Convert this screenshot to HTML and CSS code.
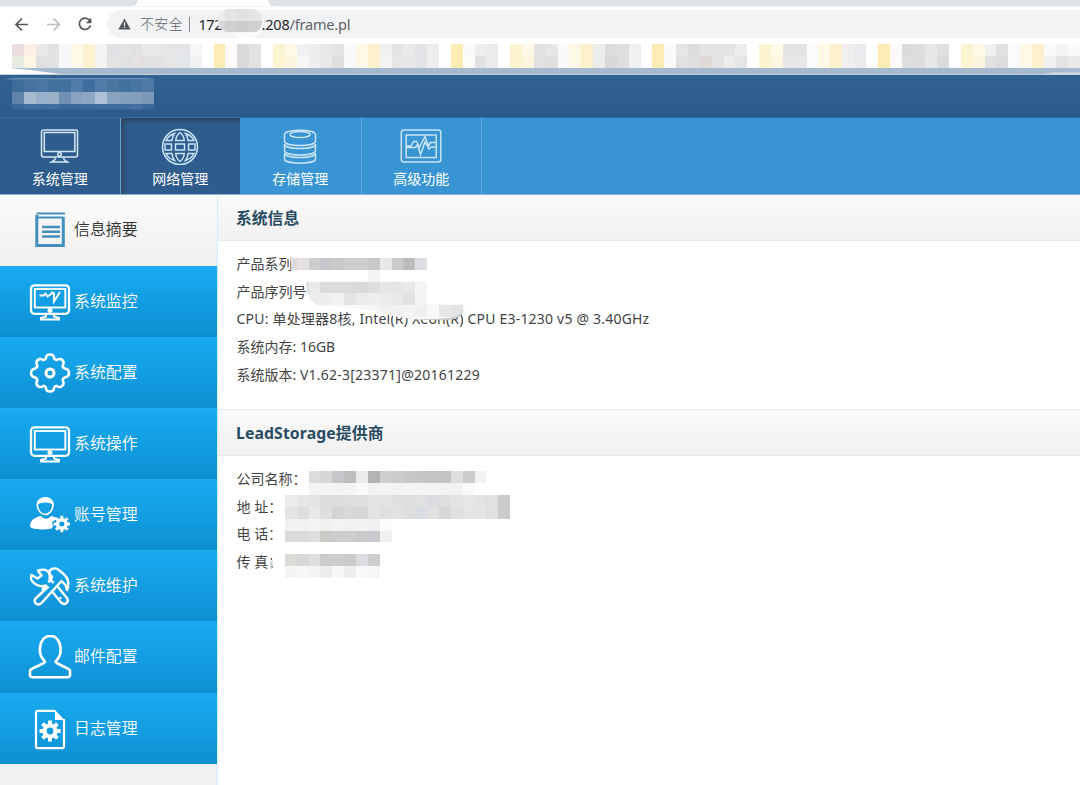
FILE: index.html
```
<!DOCTYPE html>
<html lang="zh-CN">
<head>
<meta charset="utf-8">
<title>系统管理</title>
<link rel="stylesheet" href="styles.css">
</head>
<body>
<div class="window">
  <div class="tabstrip"><i class="tab-left"></i><i class="tab-right"></i></div>
  <div class="toolbar">
    <svg class="nav-buttons" width="77" height="32" viewBox="0 8 77 32" fill="none" stroke-width="1.7">
      <path stroke="#54575c" d="M28 24.500H16.500M22 18.500l-6 6 6 6"/>
      <path stroke="#bcbec1" d="M47 24.500h12M53.500 18.500l6 6-6 6"/>
    </svg>
    <svg class="reload" width="16" height="16" viewBox="0 0 16 16" fill="none" stroke="#54575c" stroke-width="1.7"><path d="M12.600 4.300A5.700 5.700 0 1 0 13.500 9.500"/><path d="M14.300 1.800v5.400H8.900z" fill="#54575c" stroke="none"/></svg>
    <div class="address">
      <svg width="13" height="12" viewBox="0 0 13 12"><path d="M6.500 .5 12.700 11.500H.3z" fill="#54575c"/><path d="M6.500 4.300v3.500M6.500 8.700v1.300" stroke="#fff" stroke-width="1.200"/></svg>
      <span class="unsafe">不安全</span><i class="bar"></i><span class="ip">172</span><span class="host">.208</span><span class="path">/frame.pl</span>
    </div>
  </div>
  <div class="bookmarks"></div>
  <div class="band"></div>
  <header class="brand"></header>
  <nav class="topnav">
    <a class="top dark">
      <svg width="40" height="38" viewBox="0 0 40 38" fill="none" stroke="#d5e8f6" stroke-width="1.500"><rect x="1.500" y="3" width="36" height="27" rx="2"/><rect x="4.300" y="5.500" width="30.500" height="19"/><circle cx="19.500" cy="27.300" r="1.800"/><path d="M15.500 30.500c0 3-1.500 3-4 4.500h16c-2.500-1.500-4-1.500-4-4.500"/></svg>
      <span>系统管理</span></a>
    <a class="top dark pressed">
      <svg width="40" height="38" viewBox="0 0 40 38" fill="none" stroke="#c7e4f8" stroke-width="1.500"><circle cx="20" cy="20" r="17.500"/><path d="M5 17h6.500v6H5zM15.500 17h9v6h-9zM28.500 17H35v6h-6.500zM20 5.500c-2.500 2-4 4.500-4.300 8h8.600c-.3-3.500-1.800-6-4.300-8zM20 34.500c-2.500-2-4-4.500-4.300-8h8.600c-.3 3.500-1.800 6-4.300 8zM14.500 6.500C10 8 7.300 10.500 6 13.500h6c.2-2.500 1-5 2.500-7zM25.500 6.500c4.500 1.500 7.200 4 8.500 7h-6c-.2-2.500-1-5-2.500-7zM14.500 33.500c-4.500-1.500-7.200-4-8.500-7h6c.2 2.500 1 5 2.500 7zM25.500 33.500c4.500-1.500 7.200-4 8.500-7h-6c-.2 2.500-1 5-2.500 7z"/></svg>
      <span>网络管理</span></a>
    <a class="top">
      <svg width="40" height="38" viewBox="0 0 40 38" fill="none" stroke="#c9e4f6" stroke-width="1.500"><ellipse cx="20" cy="7.500" rx="10" ry="3"/><path d="M4.500 8c0-6.500 31-6.500 31 0v6c0 6-31 6-31 0zM4.500 17c0 6 31 6 31 0v6.500c0 6-31 6-31 0zM4.500 26c0 6 31 6 31 0v6c0 5.500-31 5.500-31 0z"/></svg>
      <span>存储管理</span></a>
    <a class="top">
      <svg width="44" height="38" viewBox="0 0 44 38" fill="none" stroke="#c9e4f6" stroke-width="1.500"><rect x="2.300" y="3" width="39.500" height="32" rx="2.500"/><rect x="7.200" y="8" width="30" height="22.500"/><path d="M8 19h4l2.500-4.500h3l3 5.500L26 9.500 29.500 19l2-3.500h5M8 20.500h8.500l2-3 3 10L26 15l4 7 2-2h5"/></svg>
      <span>高级功能</span></a>
  </nav>
  <div class="main">
    <aside class="side">
      <a class="item current"><svg class="ico" viewBox="0 0 44 44" fill="none" stroke="#438fbd"><path d="M8.800 7v30.500h26.500V9" stroke-width="3"/><path d="M8.500 5.500h28.500M9 9.500h26.500" stroke-width="2"/><path d="M14 19h18M14 23.700h18M14 28.400h18" stroke-width="2.500"/></svg><span>信息摘要</span></a>
      <a class="item"><svg class="ico" viewBox="0 0 44 44"><use href="#monitor"/><path d="M11.500 15.500h4l2-2 2 3 3-2 2-2 1.500 1v8l6-9.500" stroke="#fff" stroke-width="1.900" fill="none"/></svg><span>系统监控</span></a>
      <a class="item"><svg class="ico" viewBox="0 0 44 44" fill="none" stroke="#fff" stroke-width="2.600"><circle cx="22" cy="22" r="4" stroke-width="3"/><path stroke-linejoin="round" d="M18 7q0-3.500 4-3.500T26 7q.5 2 2.500 2.200 1.500-1.500 4-1.200 3.500 1.500 3 4.500-1.500 3 0 4.200Q37.500 18 39 18.200q2 1.300 2 3.800t-2 3.800q-1.500.2-3.500 1.500-1.500 1.200 0 4.200.5 3-3 4.500-2.500.3-4-1.200Q26.500 35 26 37q0 3.500-4 3.500T18 37q-.5-2-2.500-2.200-1.500 1.500-4 1.200-3.500-1.500-3-4.500 1.500-3 0-4.200Q6.500 26 5 25.800q-2-1.300-2-3.800t2-3.800Q6.500 18 8.500 16.700q1.500-1.200 0-4.200-.5-3 3-4.500 2.500-.3 4 1.200Q17.500 9 18 7z"/></svg><span>系统配置</span></a>
      <a class="item"><svg class="ico" viewBox="0 0 44 44"><g id="monitor" fill="none" stroke="#fff"><rect x="3" y="5.300" width="38" height="28.500" rx="3.500" stroke-width="2.300"/><rect x="6.800" y="9" width="30.500" height="18.500" stroke-width="1.900"/><circle cx="22" cy="30.500" r="2.500" fill="#fff" stroke="none"/><path d="M18 34v2.500l-5 1.500v1.500h18V38l-5-1.500V34" stroke-width="2"/></g></svg><span>系统操作</span></a>
      <a class="item"><svg class="ico" viewBox="0 0 44 44"><path fill="#fff" d="M2 33.500c0-7 5-9 11-10.500 3 3.500 7 3.500 10 0 2 1 5 1 6.500 2.500L24 29l1 4.500-1.500 2C13 37.500 3 36 2 33.500z"/><path d="M9.300 12c-.7-8 16.500-9 15.700 0-.5 5.500-3.500 9.500-7.700 9.500S10 17.500 9.300 12z" fill="none" stroke="#fff" stroke-width="1.700"/><path d="M9 12C8 1.500 26.500 1 25.200 12c-2.500-3.500-13-3.500-16.200 0z" fill="#fff"/><g transform="translate(33.800 31)"><circle r="4.300" fill="none" stroke="#fff" stroke-width="3.400"/><g stroke="#fff" stroke-width="3"><path d="M0-8.200V-5M0 5v3.200M-8.200 0H-5M5 0h3.200M-5.800-5.800l2.300 2.300M3.500 3.500l2.300 2.300M5.800-5.800 3.500-3.500M-3.500 3.500l-2.300 2.300"/></g></g></svg><span>账号管理</span></a>
      <a class="item"><svg class="ico" viewBox="0 0 44 44" fill="none" stroke="#fff" stroke-width="2.400" stroke-linejoin="round"><path d="M20.500 22.500 7.500 34.500c-3 4 2.500 8 6 4.500L33.500 17l4 4 1.500 5c3.500-8.500-.5-14.500-6.500-18.500-5-6-11-2-11.500 1.500l3 4-3.500 5.500"/><path d="m24.500 28 8.500 10.500c4 3.500 8.500-.5 6-4.500L29.500 22.500M14 26l4-4.500c-3 1-6 1-9-.5-5-2.500-7-6.500-5.500-10l6 3.500 4-3-3.500-5c8-2.500 13 1 11.500 8l4 4.500"/><circle cx="32.500" cy="34" r="1" fill="#fff" stroke-width=".5"/></svg><span>系统维护</span></a>
      <a class="item"><svg class="ico" viewBox="0 0 44 44" fill="none" stroke="#fff" stroke-width="2.600" stroke-linejoin="round"><path d="M17 27.500c-3-3.500-5.500-6.500-5-10.500C10.500-3.500 34-3.500 32.500 17c.5 4-2 7-5 10.500 1.500 3 10 4.500 14.500 8.500v5.500q-.5 1.500-2 1.500H4q-1.500 0-2-1.500V36c4.500-4 13.500-5.500 15-8.500z" transform="translate(0 -.8)"/></svg><span>邮件配置</span></a>
      <a class="item"><svg class="ico" viewBox="0 0 44 44"><path d="M27 3.800H10q-2 0-2 2v33.400q0 2 2 2h24q2 0 2-2V12" fill="none" stroke="#fff" stroke-width="2.200"/><path d="M27 3l9.500 10H27z" fill="#fff"/><g transform="translate(22 24)"><circle r="5.500" fill="none" stroke="#fff" stroke-width="4.200"/><g stroke="#fff" stroke-width="4"><path d="M0-10.500V-6M0 6v4.500M-10.500 0H-6M6 0h4.500M-7.400-7.400l3 3M4.400 4.400l3 3M7.400-7.400l-3 3M-4.400 4.400l-3 3"/></g></g></svg><span>日志管理</span></a>
    </aside>
    <section class="content">
      <h2>系统信息</h2>
      <div class="lines first">
        <p>产品系列</p>
        <p>产品序列号</p>
        <p><span class="cpu">CPU: 单处理器8核, Intel(R) Xeon(R) CPU E3-1230 v5 @ 3.40GHz</span></p>
        <p>系统内存: 16GB</p>
        <p>系统版本: <span class="ver">V1.62-3[23371]@20161229</span></p>
      </div>
      <h2 class="second">LeadStorage提供商</h2>
      <div class="lines">
        <p>公司名称：</p>
        <p>地 址：</p>
        <p>电 话：</p>
        <p>传 真：</p>
      </div>
    </section>
  </div>
  <svg class="mosaic" width="1080" height="785" viewBox="0 0 1080 785">
    <defs>
      <clipPath id="ipClip"><path d="M229 8.500h24q9 3 9 12T256 32h-29q-8-2-9-11t11-12.500z"/></clipPath>
      <clipPath id="brandClip"><rect x="12" y="79" width="142.300" height="30.500" rx="3"/></clipPath>
      <clipPath id="serialClip"><path d="M306 281h121v23h38q-2 15-17 16h-23q-30-2-50-9-20-5-55-4-14-6-14-26z"/></clipPath>
    </defs>
    <path fill="#fff" d="M0 68h10l20 2 30 4H0z"/>
    <path fill="#d8dce2" d="M1080 72.500h-28l-8 1.800h36z"/>
    <path fill="#fff" d="M291.500 255H430v16H291.500zM275.500 496h13v22h-13zM272.500 520h16v27h-16zM270 550h16v26h-10z"/>
    <path fill="#dcdce0" d="M290 258h7v12h-5z"/>
    <path fill="#c9c9c8" d="M270 569q0-8 2.500-9v8z"/>
    <path fill="#f9f9f9" d="M306 281h121v23h38q-2 15-17 16h-23q-30-2-50-9-20-5-55-4-14-6-14-26z"/>
    <path fill="#fafafa" d="M229 8.500h24q13 6 9 22-5 8-17 8-10 0-15-6-14-3-12-12 2-10 11-12z"/>
    <path d="M6 79.500q4-1.500 12-1.500h128q6 0 8 1.500z" fill="#6b91b5"/>
  </svg>
</div>
<script src="mosaic.js"></script>
</body>
</html>
```
FILE: styles.css
```
* { box-sizing: border-box; }
body { margin: 0; background: #fff; font-family: "Noto Sans", "Noto Sans CJK SC", sans-serif; color: #444; }
.window { position: relative; width: 1080px; height: 785px; overflow: hidden; display: flex; flex-direction: column; }
.tabstrip { height: 6px; flex: none; display: flex; justify-content: space-between; background: #fff; }
.tab-left { width: 138px; background: #dee1e6; border-radius: 0 0 6px 0; }
.tab-right { width: 812px; background: #dee1e6; border-radius: 0 0 0 6px; }
.toolbar { height: 38px; flex: none; display: flex; align-items: flex-start; padding-top: 4px; border-top: 1px solid #f3f4f5; }
.nav-buttons { flex: none; margin-top: -3px; }
.reload { margin-top: 5px; flex: none; }
.address { flex: 1; height: 28px; margin-left: 14px; margin-top: -1px; border-radius: 14px 0 0 14px; background: #f1f3f4; display: flex; align-items: center; padding-left: 11px; font-size: 14.500px; line-height: 28px; color: #5f6368; }
.unsafe { font-family: "Noto Sans CJK SC", sans-serif; font-weight: 300; font-size: 14.200px; margin-left: 9px; margin-top: -2px; }
.bar { width: 1px; height: 15px; background: #85888c; margin: 0 9px 0 6px; }
.ip, .host, .path { margin-top: -1px; }
.ip, .host { color: #26282b; }
.ip { width: 63px; letter-spacing: -.5px; }
.host, .path { letter-spacing: -.2px; }
.bookmarks { height: 24px; flex: none; }
.band { height: 7px; flex: none; background: #a6bacf; border-bottom: 1px solid #c9cdd0; }
.brand { height: 43px; flex: none; background: linear-gradient(#306292, #2c5a8b); border-bottom: 1px solid #2f6ea6; }
.topnav { height: 77px; flex: none; display: flex; background: #3894d3; border-bottom: 1px solid #84b4da; }
.top { width: 120.500px; display: flex; flex-direction: column; align-items: center; padding-top: 9px; border-right: 1px solid #5eaade; color: #fff; font: 14px/22px "Noto Sans CJK SC", sans-serif; }
.top svg { height: 38px; flex: none; }
.top span { margin-top: 2px; }
.dark { background: #2d5c8d; }
.top.pressed { width: 119.500px; border-right: 0; box-shadow: inset 4px 4px 4px -1px #34465c; }
.pressed + .top { width: 121.500px; }
.main { flex: 1; display: flex; min-height: 0; }
.side { width: 217.500px; flex: none; background: #f1f1f1; border-right: 1px solid #d3ecfa; }
.item { height: 71.150px; display: flex; align-items: center; padding-left: 28px; background: linear-gradient(#19aaf1, #0d90d2); border-top: 1px solid #21a9ee; color: #fff; font: 350 15.900px/24px "Noto Sans CJK SC", sans-serif; }
.item.current { height: 70.700px; background: linear-gradient(#fbfbfb, #f0f0f0); border-top: 0; color: #333; }
.item span { margin-top: -2px; margin-left: 2px; }
.ico { width: 44px; height: 44px; flex: none; margin-top: 0; }
.content { flex: 1; }
h2 { margin: 0; height: 46px; padding-left: 18.500px; background: linear-gradient(#fafafa, #f1f1f1); border: 1px solid #e7e7e7; border-width: 0 0 1px; font: 700 15.800px/46px "Noto Sans", "Noto Sans CJK SC", sans-serif; color: #284a62; }
.second { height: 47px; border-top-width: 1px; line-height: 47px; letter-spacing: .1px; }
.lines { padding: 9px 0 0 19px; }
.first { height: 168px; }
.lines p { margin: 0; height: 27.700px; font: 14px/27.700px "Noto Sans", "Noto Sans CJK SC", sans-serif; white-space: nowrap; }
.cpu { letter-spacing: .2px; }
.ver { letter-spacing: .24px; }
.mosaic { position: absolute; left: 0; top: 0; pointer-events: none; }
```
FILE: mosaic.js
```
// Each run: start column, row, colours of consecutive cells, optional clip id.
const P = 11.86;
const runs = [
  [0, 0, "ecdede fdeee5 e9e8e7 e1e3e3 f6f7f8 fef8e6 fdf1cf f5f4f3 e0e2e5 e2e3e5 e3e0e1 e8e8e8 e6e8e7 e6e5e4 e3e5ea f5f7f7 ffffff fdebb5 fdfaf7 dadadd e2e2e1 ffffff fcf3d0 fef8e6 f0f0f2 ecedee e8e8e8 e4e4e2 f9fbfb fef8e6 fdf0cc efefef e2e4e5 ebe9e8 e2e4e7 eeeeee ffffff fdebb5 fafafa eeeeee ebebeb ffffff fcf3d0 fef8e6 e2e2e3 e7e7e7 fafafa fef8e6 fdf0cc ececea dcdcdc dedede eff0f0 ffffff fdebb5 fcfaf8 e4e5e6 dcdddf e5e3e1 e3e3e3 e4e4e4 ececec ffffff fcf3d0 fef8e6 e3e3e3 e3e3e3 fafcfb fef8e6 fdf0cc f0eeee e8eaed fefefe fdebb5 fcfaf8 dadbdd dedede e6e8e8 dfdfdf ffffff fcf3d0 fef8e6 f0f0f0 e0e0e3 fafbfb fef8e6 fdf0cc fafafa f3f3f3 fafafa fafafa"],
  [0, 1, "e6ece0 fef5e6 dfe0e1 e1e2e3 f6f7f8 fef8e6 fdf1cf f5f4f3 e5e3e2 dfe1e2 e5e2e1 dfe0e0 e2e2e2 e6e5e4 e3e6e9 f0f1f2 ffffff fdebb5 fdfaf7 d9d9dc e2e2e1 ffffff fcf3d0 fcf5df f6f6f6 eeeeee e8e8e8 dfdfde f9fbfb fef8e6 fdf0cc f4f4f4 e6e6e4 e7e7e7 e2e4e7 eeeeee ffffff fdebb5 fdfcf8 e1e2e4 ebebeb ffffff fcf3d0 fcf5df dfe0df dfdfde fafafa fef8e6 fdf0cc ececea d9d7d7 dedede eff0f0 ffffff fdebb5 fcfaf8 e0e0e0 dfdfdf dfdad8 e3e3e3 ecedeb e4e5e7 ffffff fcf3d0 fcf5df e7e7e7 e7e7e7 fafcfb fef8e6 fdf0cc f0eeee ebebec fefefe fdebb5 fcfaf8 dddee0 dcdcdc e6e8e8 d9dadc ffffff fcf3d0 fcf5df e1e1e1 dcdcdc fafbfb fef8e6 fdf0cc f0f0f0 e3e3e3 ebe9e8 ebe9e8"],
  [17, -3, "e9eaeb e3e4e5 e0e1e2 e4e5e6 e6e6e6", "ipClip"],
  [17, -2, "d4d6d8 cfd0d1 cbcdcf cfd0d0 c4c4c5", "ipClip"],
  [0, 3, "3d6b9a 4671a0 4a77a5 42709f 4271a0 4e7ba7 3f6e9e 507ba6 49759f 43719f 4975a2 4d79a4", "brandClip"],
  [0, 4, "6083ab a7bbd0 9ab1cb 9ab0c8 6f90b3 87a3c1 8ea7c3 adc0d5 88a4c0 83a0bd 839fbd 7c98b8", "brandClip"],
  [0, 5, "3c6897 40709f 406f9e 40709d 3c6999 3c6b9b 3d6b9b 406d9b 3f6c9b 3f6d9c 456f9f 3d6a9a", "brandClip"],
  [24, 18, "e6e2e2 cdcdcd c5c5cb c9c9c9 d0cfce cdcfce c5c8c7 e8e8e8 cbcbcc bfbcba dddee2"],
  [30, 19, "f4f4f4"],
  [24, 20, "e0e0e0 e9e9e9 dadcdb dcdcdd dadada d8d9d9 dddede e6e6e6 e4e4e4 e8e8e6 f5f5f6", "serialClip"],
  [24, 21, "e6e6e8 ebebed eeeeee f1f1f1 e4e4e4 ebebeb eeeeee eaeaea e8e8e8 e2e2e3 f4f4f4", "serialClip"],
  [29, 22, "f7f7f7 f5f5f5 f0f0f0 f1f1f1 f3f3f3 eeeeee f8f8f8 e6e8e8 e3e5e5", "serialClip"],
  [25, 36, "dcdcdd d6d6d6 c5c6ca bcbebd ebebeb b3b3b3 cfcfcf cbcbcb c8c8c7 c5c5c5 c4c4c4 c3c3c3 dedede cbcdcd f2f3f3"],
  [25, 37, "f5f3f3 f5f5f5 f3f3f3 f4f4f4 f9f9f9 f2f2f2 f4f4f4 f3f3f3 f5f5f5 f4f4f4 f4f4f4 f3f3f3 f1f2f2 f8f8f8"],
  [23, 38, "ebebeb e6e6e6 e3e3e3 dddcda dddddf dfdfdf dedede e2e3e3 e3e3e3 dfdfdf dedede e0e0e0 dadcdf dedede e2e4e4 e7e5e5 e3e3e3 e0e0e0 cbcccd"],
  [23, 39, "e4e4e4 dfdcdd e6e8e9 dedede d5d2d3 d9d9db d7d7d9 e3e3e3 dfdfdd e1e1e2 dedede d9dce2 dfe1e0 d7d7d7 dedfe1 e4e4e5 e4e4e4 dfe0df cbcccd"],
  [23, 40, "f3f1f0 f1f1f1 f4f4f4 efefef f3f3f3 f1f1f1 f2f2f2 f0f0f0 fbfbfb"],
  [23, 41, "dadada dadada dfdfde cbcbc7 cecccc cccfcc cacac8 c9cacd f1f1f1"],
  [23, 43, "dadad7 d8d8d8 dfdfdf cbcccb cdcdcb c9cbc9 dbdcdf cccdcf"],
  [23, 44, "f5f5f5 f7f7f7 f5f5f5 eeeeee f7f7f7 eeeeee f8f8f8 f6f6f6"]
];
const root = document.querySelector(".mosaic");
for (const [col, row, cells, clip] of runs) {
  const g = document.createElementNS("http://www.w3.org/2000/svg", "g");
  if (clip) g.setAttribute("clip-path", `url(#${clip})`);
  cells.split(" ").forEach((c, i) => {
    const r = document.createElementNS("http://www.w3.org/2000/svg", "rect");
    const x = Math.round(12 + (col + i) * P), y = Math.round(44.3 + row * P);
    r.setAttribute("x", x);
    r.setAttribute("y", y);
    r.setAttribute("width", Math.round(12 + (col + i + 1) * P) - x);
    r.setAttribute("height", Math.round(44.3 + (row + 1) * P) - y);
    r.setAttribute("fill", "#" + c);
    g.appendChild(r);
  });
  root.appendChild(g);
}
const edge = document.createElementNS("http://www.w3.org/2000/svg", "path");
edge.setAttribute("d", "M400 318q25 2 48 0 12-1 16-9-2 10-16 11h-23q-15-1-25-2z");
edge.setAttribute("fill", "#cdcdcd");
root.appendChild(edge);
```
